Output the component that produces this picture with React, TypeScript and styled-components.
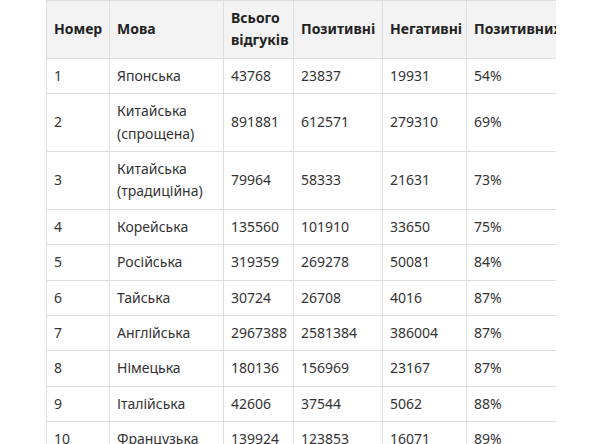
import * as React from 'react';
import styled, { createGlobalStyle } from 'styled-components';

const GlobalStyle = createGlobalStyle`
  html, body {
    margin: 0;
    padding: 0;
    background: #fff;
  }
  body {
    font-family: 'Noto Sans', 'Open Sans', Arial, sans-serif;
    color: #333;
  }
`;

const Page = styled.main`
  display: flex;
  justify-content: center;
  padding-left: 46px;
  padding-right: 44px;
`;

const Scroller = styled.div`
  width: 510px;
  overflow: hidden;
`;

const Table = styled.table`
  border-collapse: collapse;
  table-layout: fixed;
  width: 650px;
  font-size: 14px;
  line-height: 22.4px;
`;

const Th = styled.th`
  background: #f3f3f3;
  border: 1px solid #dedede;
  padding: 6px 7px;
  text-align: left;
  vertical-align: middle;
  font-weight: 700;
  color: #222;
`;

const Td = styled.td`
  border: 1px solid #dedede;
  padding: 6px 7px;
  text-align: left;
  vertical-align: middle;
  font-weight: 400;
  color: #333;
`;

const columns = [63, 114, 70, 89, 84, 230];

const rows: [number, string, number, number, number][] = [
  [1, 'Японська', 43768, 23837, 19931],
  [2, 'Китайська (спрощена)', 891881, 612571, 279310],
  [3, 'Китайська (традиційна)', 79964, 58333, 21631],
  [4, 'Корейська', 135560, 101910, 33650],
  [5, 'Російська', 319359, 269278, 50081],
  [6, 'Тайська', 30724, 26708, 4016],
  [7, 'Англійська', 2967388, 2581384, 386004],
  [8, 'Німецька', 180136, 156969, 23167],
  [9, 'Італійська', 42606, 37544, 5062],
  [10, 'Французька', 139924, 123853, 16071],
];

export default function App() {
  return (
    <>
      <GlobalStyle />
      <Page>
        <Scroller>
          <Table>
            <colgroup>
              {columns.map((w, i) => (
                <col key={i} style={{ width: w }} />
              ))}
            </colgroup>
            <thead>
              <tr>
                <Th>Номер</Th>
                <Th>Мова</Th>
                <Th>Всього відгуків</Th>
                <Th>Позитивні</Th>
                <Th>Негативні</Th>
                <Th>Позитивних відгуків</Th>
              </tr>
            </thead>
            <tbody>
              {rows.map(([n, lang, total, pos, neg]) => (
                <tr key={n}>
                  <Td>{n}</Td>
                  <Td>{lang}</Td>
                  <Td>{total}</Td>
                  <Td>{pos}</Td>
                  <Td>{neg}</Td>
                  <Td>{Math.round((pos / total) * 100)}%</Td>
                </tr>
              ))}
            </tbody>
          </Table>
        </Scroller>
      </Page>
    </>
  );
}
